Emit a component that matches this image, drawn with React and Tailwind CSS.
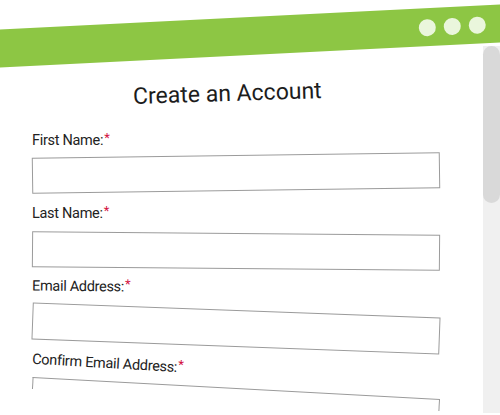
import React from 'react';

const font = { fontFamily: 'Roboto, "Liberation Sans", sans-serif' };

function Label({ text, className = '' }) {
  return (
    <div className={`ml-[32px] w-fit text-[14.5px] leading-[18px] tracking-[-0.3px] text-[#222] ${className}`}>
      {text}
      <span className="text-[13px] text-[#d3123f] relative -top-[3px] ml-[1px]">*</span>
    </div>
  );
}

export default function App() {
  return (
    <div className="w-[500px] h-[415px] overflow-hidden bg-white flex flex-col" style={font}>
      {/* window title bar */}
      <div className="relative z-10 mt-[16.5px] -ml-[30px] w-[560px] h-[38px] shrink-0 bg-[#8dc644] -rotate-[2.86deg] flex items-center justify-end gap-[8px] pr-[44px]">
        <span className="w-[17px] h-[17px] rounded-full bg-[#eaf6dc]" />
        <span className="w-[17px] h-[17px] rounded-full bg-[#eaf6dc]" />
        <span className="w-[17px] h-[17px] rounded-full bg-[#eaf6dc]" />
      </div>

      <div className="-mt-[8.5px] h-[367px] flex">
        <div className="flex-1 flex flex-col">
          <h1 className="mt-[35px] ml-[133px] w-fit text-[23px] leading-[26px] text-[#1c1c1c] -rotate-[1.8deg]">
            Create an Account
          </h1>

          <Label text="First Name:" className="mt-[25px]" />
          <div className="mt-[5px] ml-[32px] w-[408px] h-[36px] border border-[#9b9b9b] -rotate-[0.8deg]" />

          <Label text="Last Name:" className="mt-[14px]" />
          <div className="mt-[9.5px] ml-[32px] w-[408px] h-[36px] border border-[#9b9b9b] rotate-[0.5deg]" />

          <Label text="Email Address:" className="mt-[9.5px] rotate-[0.6deg]" />
          <div className="mt-[13.5px] ml-[32px] w-[408px] h-[37px] border border-[#9b9b9b] rotate-[2.1deg]" />

          <Label text="Confirm Email Address:" className="mt-[8px] rotate-[3.3deg]" />
          <div className="mt-[15px] ml-[32px] w-[408px] h-[12px] border border-b-0 border-[#9b9b9b] rotate-[3.1deg]" />
        </div>

        {/* scrollbar */}
        <div className="w-[17px] bg-[#f0f0f0] flex flex-col">
          <div className="h-[157px] rounded-full bg-[#d9d9d9]" />
        </div>
      </div>
    </div>
  );
}
